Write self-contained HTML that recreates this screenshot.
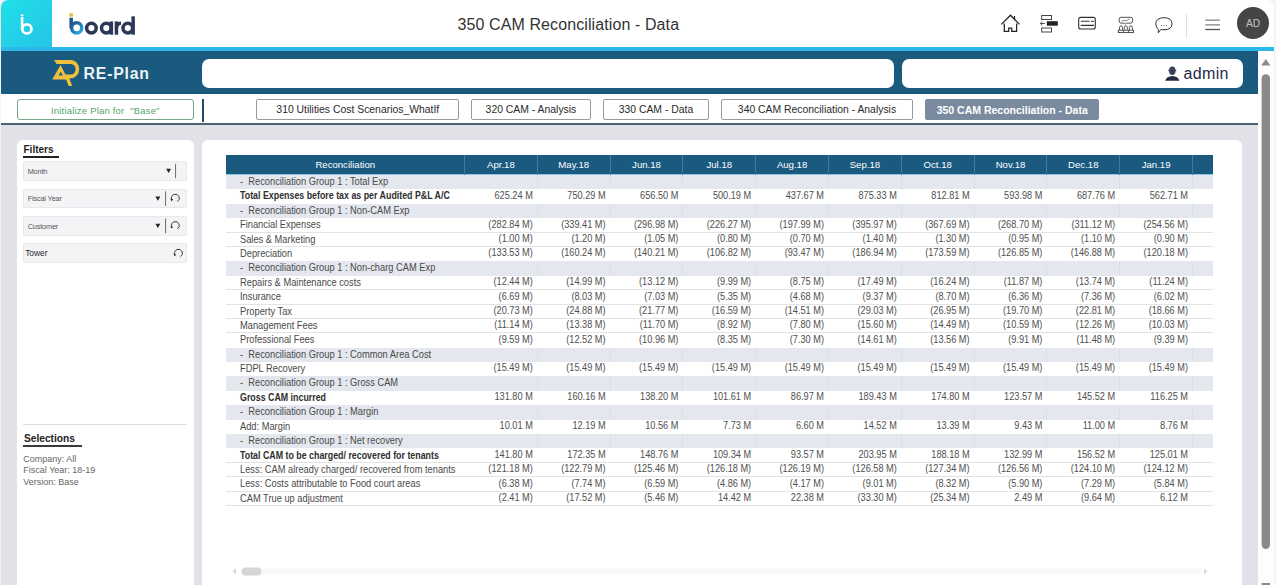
<!DOCTYPE html>
<html><head><meta charset="utf-8">
<style>
*{margin:0;padding:0;box-sizing:border-box}
html,body{width:1276px;height:585px;overflow:hidden}
body{background:#f4f4f5;font-family:"Liberation Sans",sans-serif;position:relative;color:#333}
.abs{position:absolute}
#hdr{left:1px;top:0;width:1273px;height:48px;background:#fff;border-radius:7px 7px 0 0;overflow:hidden}
#sq{left:1px;top:0;width:51px;height:48px;background:linear-gradient(135deg,#1fe0ea,#27c3e6);border-radius:7px 0 0 0}
#title{left:457.5px;top:16.2px;font-size:16px;letter-spacing:0.1px;color:#333;white-space:nowrap}
#cyan{left:1px;top:47px;width:1273px;height:4px;background:#2cb8e9}
#bar{left:1px;top:51px;width:1257px;height:43px;background:#1b5a7f}
#box1{left:202px;top:58.5px;width:691.5px;height:29.5px;background:#fff;border-radius:7px}
#box2{left:902px;top:58.5px;width:341px;height:29.5px;background:#fff;border-radius:7px}
#admin{left:1183.5px;top:65.3px;font-size:16px;letter-spacing:0.35px;color:#1f2a48;white-space:nowrap}
#tabrow{left:1px;top:94px;width:1257px;height:29px;background:#fff}
#tabline{left:1px;top:123px;width:1257px;height:2px;background:#4e6170}
#gray{left:1px;top:125px;width:1257px;height:460px;background:#e0e2e7}
#vscroll{left:1258px;top:51px;width:15.5px;height:534px;background:#fdfdfd}
#init{left:17px;top:99.2px;width:176.6px;height:20.5px;border:1px solid #7aa68a;border-radius:3px;background:#fff;color:#52a46c;font-size:9.4px;letter-spacing:0.25px;text-align:center;line-height:18.5px;padding-top:2px;white-space:pre}
#vdiv{left:202px;top:99px;width:2px;height:22.5px;background:#1d4d6a}
.tab{position:absolute;top:99.4px;height:20.3px;border:1px solid #9a9a9a;border-radius:2px;background:#fff;font-size:10.4px;color:#2a2a2a;text-align:center;line-height:18.3px;padding-top:1.1px;white-space:nowrap}
.tab.act{background:#7a8ba0;border-color:#7a8ba0;color:#fff;font-weight:bold;font-size:10.5px}
#lp{left:17px;top:140px;width:176.5px;height:460px;background:#fff;border-radius:6px}
#mp{left:202px;top:140px;width:1040px;height:460px;background:#fff;border-radius:6px}
.hd{position:absolute;top:155px;height:20px;line-height:19.6px;text-align:center;color:#fff;font-size:9.6px;white-space:nowrap}
.vs{position:absolute;top:155px;height:20px;width:1px;background:#3f7aa0}
.grow{position:absolute;left:226px;width:987px;background:#e4e7ee}
.gsep{position:absolute;width:1px;background:#dadee6}
.hl{position:absolute;left:226px;width:987px;height:0.8px;background:#e3e3e3}
.lab{position:absolute;transform:scaleY(1.1);transform-origin:0 10.6px;height:14.39px;line-height:14.39px;font-size:9.3px;color:#4a4a4a;white-space:nowrap;padding-top:0px}
.lab.b{font-weight:bold;color:#2e2e2e;font-size:8.85px;transform:translateY(0.6px) scaleY(1.17)}
.val{position:absolute;transform:scaleY(1.1);transform-origin:0 10.6px;height:14.39px;line-height:14.39px;font-size:9.2px;color:#505050;text-align:right;white-space:nowrap;padding-top:0.2px}
.fbox{position:absolute;left:23px;width:163.5px;height:19.5px;background:#f3f4f6;border:1px solid #e6e8ec;border-radius:2px}
.ftxt{position:absolute;font-size:7.3px;letter-spacing:-0.15px;color:#555;white-space:nowrap}
.sel{position:absolute;left:23.3px;font-size:9px;color:#666;white-space:nowrap}
</style></head><body>
<div id="hdr" class="abs"></div>
<div id="sq" class="abs"></div>
<svg class="abs" style="left:0;top:0" width="160" height="48" viewBox="0 0 160 48">
  <!-- small b in cyan square -->
  <rect x="20.8" y="14.4" width="2.6" height="1.6" fill="#fff"/>
  <rect x="20.8" y="16.8" width="2.6" height="12" fill="#fff"/>
  <circle cx="26.9" cy="28.9" r="4.6" fill="none" stroke="#fff" stroke-width="2.7"/>
  <!-- board logo -->
  <defs><linearGradient id="bg1" x1="0" y1="0" x2="1" y2="1"><stop offset="0" stop-color="#1d4f86"/><stop offset="1" stop-color="#2ab0e6"/></linearGradient></defs>
  <rect x="69.4" y="13.3" width="3.5" height="3.3" fill="#e9b93a"/>
  <rect x="69.4" y="17.7" width="3.5" height="10.5" fill="#1d5a92"/>
  <circle cx="76.7" cy="27.9" r="5.05" fill="none" stroke="url(#bg1)" stroke-width="3.5"/>
  <circle cx="91.4" cy="28.1" r="4.8" fill="none" stroke="#2c3857" stroke-width="3.5"/>
  <circle cx="106.3" cy="28.1" r="4.8" fill="none" stroke="#2c3857" stroke-width="3.5"/>
  <rect x="109.6" y="21.4" width="3.5" height="13.3" fill="#2c3857"/>
  <rect x="114.7" y="21.4" width="3.5" height="13.3" fill="#2c3857"/>
  <path d="M114.7,28 Q114.7,21.4 121,21.4 L121,24.9 Q118.2,24.9 118.2,28 Z" fill="#2c3857"/>
  <circle cx="127.8" cy="28.1" r="4.8" fill="none" stroke="#2c3857" stroke-width="3.5"/>
  <rect x="131.4" y="16.3" width="3.5" height="18.4" fill="#2c3857"/>
</svg>
<div id="title" class="abs">350 CAM Reconciliation - Data</div>
<!-- header icons -->
<svg class="abs" style="left:990px;top:0" width="286" height="48" viewBox="990 0 286 48">
  <g fill="none" stroke="#222" stroke-width="1.25" stroke-linejoin="miter">
    <path d="M1001.3,24.4 L1010.5,15.2 L1019.5,24.4"/>
    <path d="M1014.5,16 L1014.5,19.3"/>
    <path d="M1004.3,23.6 V31.4 H1008.7 V28.1 H1011.7 V31.4 H1016.6 V23.6"/>
  </g>
  <g fill="none" stroke="#444" stroke-width="1">
    <rect x="1041.7" y="15.5" width="9.8" height="4"/>
    <rect x="1041.7" y="28" width="9.8" height="4"/>
  </g>
  <rect x="1046.8" y="21.2" width="11" height="4.5" fill="#222"/>
  <path d="M1040.2,23.5 H1045 M1042.3,21.6 L1040.3,23.5 L1042.3,25.4" fill="none" stroke="#444" stroke-width="0.9"/>
  <rect x="1078.7" y="17.4" width="16.6" height="11.6" rx="2" fill="none" stroke="#333" stroke-width="1.1"/>
  <path d="M1081.3,21.3 H1089.2 M1091.4,21.3 H1093.6 M1081.3,25.4 H1093.6" stroke="#333" stroke-width="1.1" stroke-linecap="round"/>
  <g fill="none" stroke="#333" stroke-width="0.85">
    <path d="M1120.9,17.3 H1130.9 Q1132.6,17.3 1132.6,19.5 V21 Q1132.6,23.1 1130.9,23.1 H1126.6 L1125.4,24.3 L1124.2,23.1 H1120.9 Q1119.2,23.1 1119.2,21 V19.5 Q1119.2,17.3 1120.9,17.3 Z"/>
    <path d="M1121.7,21.5 Q1123,19.8 1124.5,20.6 Q1126,21.4 1127.5,20 Q1128.6,19 1129.7,19.1" stroke-width="0.6"/>
    <path d="M1119.5,29.8 V27.4 A1.5,1.5 0 0 1 1122.5,27.4 V29.8 M1124.3,29.8 V27.4 A1.5,1.5 0 0 1 1127.3,27.4 V29.8 M1129.4,29.8 V27.4 A1.5,1.5 0 0 1 1132.4,27.4 V29.8"/>
    <rect x="1118.3" y="30.2" width="15.2" height="2.4"/>
    <path d="M1123.4,30.2 V32.6 M1128.6,30.2 V32.6"/>
  </g>
  <path d="M1158.3,29.3 Q1155.7,27.5 1155.8,23.8 Q1156,17.8 1164,17.7 Q1172,17.8 1172,23.8 Q1172,29.7 1164,29.7 Q1162,29.7 1161,29.4 L1158.3,32.8 Z" fill="none" stroke="#333" stroke-width="1"/>
  <path d="M1161.2,25.7 h0.9 M1163.6,25.7 h0.9 M1166,25.7 h0.9" stroke="#333" stroke-width="0.9"/>
  <rect x="1185.9" y="14.3" width="1" height="24" fill="#dcdcdc"/>
  <path d="M1205.3,20.1 H1220 M1205.3,24.8 H1220" stroke="#808080" stroke-width="1.3"/><path d="M1205.3,29.5 H1220" stroke="#555" stroke-width="1.3"/>
  <circle cx="1253" cy="23" r="16" fill="#454545"/>
  <text x="1253" y="27.4" text-anchor="middle" font-family="Liberation Sans" font-size="10.2" fill="#c4c4c4">AD</text>
</svg>
<div id="cyan" class="abs"></div>
<div id="bar" class="abs"></div>
<svg class="abs" style="left:48px;top:55px" width="40" height="35" viewBox="48 55 40 35">
  <g fill="#f0bf3d">
    <path d="M54,60 L71,60 A8.2,9.15 0 0 1 71,78.3 L66,78.3 L64.3,74.5 L71,74.5 A4.6,5.25 0 0 0 71,64 L56.6,64 Z"/>
    <path fill-rule="evenodd" d="M60.6,65 L68,79.6 L52.2,79.6 Z M60.7,71.8 L62.9,75.6 L58.6,75.6 Z"/>
    <path d="M64.4,75 L68.2,75 L72.2,85.9 L68.6,85.9 Z"/>
  </g>
</svg>
<div class="abs" style="left:83.6px;top:65.3px;font-size:15.8px;font-weight:bold;color:#eef3f7;letter-spacing:0.8px;white-space:nowrap">RE-Plan</div>
<div id="box1" class="abs"></div>
<div id="box2" class="abs"></div>
<svg class="abs" style="left:1164px;top:65px" width="17" height="17" viewBox="1164 65 17 17">
  <ellipse cx="1172.3" cy="70.8" rx="3.2" ry="4.3" fill="#3b4058"/>
  <rect x="1168.2" y="69.8" width="8.2" height="1.5" rx="0.7" fill="#3b4058"/>
  <path d="M1165.2,80.8 Q1166.5,76.3 1172.3,76 Q1178.1,76.3 1179.4,80.8 Z" fill="#252a45"/>
</svg>
<div id="admin" class="abs">admin</div>
<div id="tabrow" class="abs"></div>
<div id="init" class="abs">Initialize Plan for  "Base"</div>
<div id="vdiv" class="abs"></div>
<div class="tab" style="left:256.3px;width:203px">310 Utilities Cost Scenarios_WhatIf</div>
<div class="tab" style="left:471.3px;width:119.3px">320 CAM - Analysis</div>
<div class="tab" style="left:602.5px;width:106.9px">330 CAM - Data</div>
<div class="tab" style="left:721.4px;width:191.2px">340 CAM Reconciliation - Analysis</div>
<div class="tab act" style="left:925.3px;width:173.8px">350 CAM Reconciliation - Data</div>
<div id="tabline" class="abs"></div>
<div id="gray" class="abs"></div>
<div class="abs" style="left:1px;top:125px;width:1257px;height:1px;background:#d9e4ed"></div>
<div id="vscroll" class="abs"></div>
<svg class="abs" style="left:1258px;top:51px" width="18" height="534" viewBox="1258 51 18 534">
  <path d="M1261.2,65.6 L1265.8,59.1 L1270.4,65.6 Z" fill="#8a8a8a"/>
  <rect x="1261.6" y="74.2" width="8.4" height="474.8" rx="4.2" fill="#8a8a8a"/>
  <rect x="1261.6" y="583" width="8.4" height="4" fill="#8a8a8a"/>
</svg>
<div id="lp" class="abs"></div>
<div class="abs" style="left:23.5px;top:143.5px;font-size:10px;font-weight:bold;color:#222">Filters</div>
<div class="abs" style="left:23px;top:156.1px;width:36px;height:1.6px;background:#222"></div>
<div class="fbox" style="top:161.3px"></div>
<div class="ftxt" style="left:27.7px;top:166.5px">Month</div>
<svg class="abs" style="left:160px;top:160px" width="30" height="110" viewBox="160 160 30 110">
  <path d="M166.2,168.8 L171,168.8 L168.6,173 Z" fill="#222"/>
  <rect x="175.2" y="163.8" width="0.85" height="14.4" fill="#555"/>
  <path d="M155.4,196 L160.3,196 L157.85,200.2 Z" fill="#222"/>
</svg>
<div class="fbox" style="top:188.9px"></div>
<div class="ftxt" style="left:27.7px;top:194px">Fiscal Year</div>
<div class="fbox" style="top:216.3px"></div>
<div class="ftxt" style="left:27.7px;top:221.5px">Customer</div>
<div class="fbox" style="top:243.3px"></div>
<div class="ftxt" style="left:25.2px;top:247.6px;color:#2a2a2a;font-size:8.4px;letter-spacing:0">Tower</div>
<svg class="abs" style="left:150px;top:185px" width="40" height="80" viewBox="150 185 40 80">
  <g fill="#222">
    <path d="M155.4,196.5 L160.3,196.5 L157.85,200.7 Z"/>
    <path d="M155.4,223.8 L160.3,223.8 L157.85,228 Z"/>
  </g>
  <rect x="165.2" y="191.3" width="0.85" height="14.6" fill="#555"/>
  <rect x="165.2" y="218.6" width="0.85" height="14.6" fill="#555"/>
  <path d="M177.35,201.48 A3.9,3.9 0 1 0 171.63,199.11" fill="none" stroke="#333" stroke-width="0.95"/><path d="M170.33,198.51 L173.23,199.61 L171.43,201.21 Z" fill="#222"/>
<path d="M177.35,228.88 A3.9,3.9 0 1 0 171.63,226.51" fill="none" stroke="#333" stroke-width="0.95"/><path d="M170.33,225.91 L173.23,227.01 L171.43,228.61 Z" fill="#222"/>
<path d="M180.45,256.58 A3.9,3.9 0 1 0 174.73,254.21" fill="none" stroke="#333" stroke-width="0.95"/><path d="M173.43,253.61 L176.33,254.71 L174.53,256.31 Z" fill="#222"/>
</svg>
<div class="abs" style="left:23px;top:424.3px;width:163.7px;height:1px;background:#dcdde0"></div>
<div class="abs" style="left:24px;top:433px;font-size:10.2px;font-weight:bold;color:#222">Selections</div>
<div class="abs" style="left:23px;top:445.3px;width:59px;height:1.6px;background:#3a3a3a"></div>
<div class="sel" style="top:453.8px">Company: All</div>
<div class="sel" style="top:465.4px">Fiscal Year: 18-19</div>
<div class="sel" style="top:477.2px">Version: Base</div>
<div id="mp" class="abs"></div>
<div class="abs" style="left:226px;top:155px;width:987px;height:20px;background:#1b5a7f"></div>
<div class="abs" style="left:226px;top:174.4px;width:987px;height:0.8px;background:#8ec6e6"></div>
<div class="hd" style="left:226px;width:238.5px">Reconciliation</div>
<div class="hd" style="left:464.5px;width:72.8px">Apr.18</div>
<div class="hd" style="left:537.3px;width:72.8px">May.18</div>
<div class="hd" style="left:610.1px;width:72.8px">Jun.18</div>
<div class="hd" style="left:682.9px;width:72.8px">Jul.18</div>
<div class="hd" style="left:755.7px;width:72.8px">Aug.18</div>
<div class="hd" style="left:828.5px;width:72.8px">Sep.18</div>
<div class="hd" style="left:901.3px;width:72.8px">Oct.18</div>
<div class="hd" style="left:974.1px;width:72.8px">Nov.18</div>
<div class="hd" style="left:1046.9px;width:72.8px">Dec.18</div>
<div class="hd" style="left:1119.7px;width:72.8px">Jan.19</div>
<div class="vs" style="left:464px"></div>
<div class="vs" style="left:536.8px"></div>
<div class="vs" style="left:609.6px"></div>
<div class="vs" style="left:682.4px"></div>
<div class="vs" style="left:755.2px"></div>
<div class="vs" style="left:828px"></div>
<div class="vs" style="left:900.8px"></div>
<div class="vs" style="left:973.6px"></div>
<div class="vs" style="left:1046.4px"></div>
<div class="vs" style="left:1119.2px"></div>
<div class="vs" style="left:1192px"></div>
<div class="grow" style="top:175px;height:14.39px"></div>
<div class="gsep" style="left:536.8px;top:175px;height:14.39px"></div>
<div class="gsep" style="left:609.6px;top:175px;height:14.39px"></div>
<div class="gsep" style="left:682.4px;top:175px;height:14.39px"></div>
<div class="gsep" style="left:755.2px;top:175px;height:14.39px"></div>
<div class="gsep" style="left:828px;top:175px;height:14.39px"></div>
<div class="gsep" style="left:900.8px;top:175px;height:14.39px"></div>
<div class="gsep" style="left:973.6px;top:175px;height:14.39px"></div>
<div class="gsep" style="left:1046.4px;top:175px;height:14.39px"></div>
<div class="gsep" style="left:1119.2px;top:175px;height:14.39px"></div>
<div class="gsep" style="left:1192px;top:175px;height:14.39px"></div>
<div class="lab" style="top:175px;left:240px">-&nbsp;&nbsp;Reconciliation Group 1 : Total Exp</div>
<div class="lab b" style="top:189.49px;left:240px">Total Expenses before tax as per Audited P&amp;L A/C</div>
<div class="val" style="top:188.79px;left:464.5px;width:68.3px">625.24 M</div>
<div class="val" style="top:188.79px;left:537.3px;width:68.3px">750.29 M</div>
<div class="val" style="top:188.79px;left:610.1px;width:68.3px">656.50 M</div>
<div class="val" style="top:188.79px;left:682.9px;width:68.3px">500.19 M</div>
<div class="val" style="top:188.79px;left:755.7px;width:68.3px">437.67 M</div>
<div class="val" style="top:188.79px;left:828.5px;width:68.3px">875.33 M</div>
<div class="val" style="top:188.79px;left:901.3px;width:68.3px">812.81 M</div>
<div class="val" style="top:188.79px;left:974.1px;width:68.3px">593.98 M</div>
<div class="val" style="top:188.79px;left:1046.9px;width:68.3px">687.76 M</div>
<div class="val" style="top:188.79px;left:1119.7px;width:68.3px">562.71 M</div>
<div class="grow" style="top:203.78px;height:14.39px"></div>
<div class="gsep" style="left:536.8px;top:203.78px;height:14.39px"></div>
<div class="gsep" style="left:609.6px;top:203.78px;height:14.39px"></div>
<div class="gsep" style="left:682.4px;top:203.78px;height:14.39px"></div>
<div class="gsep" style="left:755.2px;top:203.78px;height:14.39px"></div>
<div class="gsep" style="left:828px;top:203.78px;height:14.39px"></div>
<div class="gsep" style="left:900.8px;top:203.78px;height:14.39px"></div>
<div class="gsep" style="left:973.6px;top:203.78px;height:14.39px"></div>
<div class="gsep" style="left:1046.4px;top:203.78px;height:14.39px"></div>
<div class="gsep" style="left:1119.2px;top:203.78px;height:14.39px"></div>
<div class="gsep" style="left:1192px;top:203.78px;height:14.39px"></div>
<div class="lab" style="top:203.78px;left:240px">-&nbsp;&nbsp;Reconciliation Group 1 : Non-CAM Exp</div>
<div class="hl" style="top:231.76px"></div>
<div class="lab" style="top:218.27px;left:240px">Financial Expenses</div>
<div class="val" style="top:217.57px;left:464.5px;width:68.3px">(282.84 M)</div>
<div class="val" style="top:217.57px;left:537.3px;width:68.3px">(339.41 M)</div>
<div class="val" style="top:217.57px;left:610.1px;width:68.3px">(296.98 M)</div>
<div class="val" style="top:217.57px;left:682.9px;width:68.3px">(226.27 M)</div>
<div class="val" style="top:217.57px;left:755.7px;width:68.3px">(197.99 M)</div>
<div class="val" style="top:217.57px;left:828.5px;width:68.3px">(395.97 M)</div>
<div class="val" style="top:217.57px;left:901.3px;width:68.3px">(367.69 M)</div>
<div class="val" style="top:217.57px;left:974.1px;width:68.3px">(268.70 M)</div>
<div class="val" style="top:217.57px;left:1046.9px;width:68.3px">(311.12 M)</div>
<div class="val" style="top:217.57px;left:1119.7px;width:68.3px">(254.56 M)</div>
<div class="hl" style="top:246.15px"></div>
<div class="lab" style="top:232.66px;left:240px">Sales &amp; Marketing</div>
<div class="val" style="top:231.96px;left:464.5px;width:68.3px">(1.00 M)</div>
<div class="val" style="top:231.96px;left:537.3px;width:68.3px">(1.20 M)</div>
<div class="val" style="top:231.96px;left:610.1px;width:68.3px">(1.05 M)</div>
<div class="val" style="top:231.96px;left:682.9px;width:68.3px">(0.80 M)</div>
<div class="val" style="top:231.96px;left:755.7px;width:68.3px">(0.70 M)</div>
<div class="val" style="top:231.96px;left:828.5px;width:68.3px">(1.40 M)</div>
<div class="val" style="top:231.96px;left:901.3px;width:68.3px">(1.30 M)</div>
<div class="val" style="top:231.96px;left:974.1px;width:68.3px">(0.95 M)</div>
<div class="val" style="top:231.96px;left:1046.9px;width:68.3px">(1.10 M)</div>
<div class="val" style="top:231.96px;left:1119.7px;width:68.3px">(0.90 M)</div>
<div class="lab" style="top:247.05px;left:240px">Depreciation</div>
<div class="val" style="top:246.35px;left:464.5px;width:68.3px">(133.53 M)</div>
<div class="val" style="top:246.35px;left:537.3px;width:68.3px">(160.24 M)</div>
<div class="val" style="top:246.35px;left:610.1px;width:68.3px">(140.21 M)</div>
<div class="val" style="top:246.35px;left:682.9px;width:68.3px">(106.82 M)</div>
<div class="val" style="top:246.35px;left:755.7px;width:68.3px">(93.47 M)</div>
<div class="val" style="top:246.35px;left:828.5px;width:68.3px">(186.94 M)</div>
<div class="val" style="top:246.35px;left:901.3px;width:68.3px">(173.59 M)</div>
<div class="val" style="top:246.35px;left:974.1px;width:68.3px">(126.85 M)</div>
<div class="val" style="top:246.35px;left:1046.9px;width:68.3px">(146.88 M)</div>
<div class="val" style="top:246.35px;left:1119.7px;width:68.3px">(120.18 M)</div>
<div class="grow" style="top:261.34px;height:14.39px"></div>
<div class="gsep" style="left:536.8px;top:261.34px;height:14.39px"></div>
<div class="gsep" style="left:609.6px;top:261.34px;height:14.39px"></div>
<div class="gsep" style="left:682.4px;top:261.34px;height:14.39px"></div>
<div class="gsep" style="left:755.2px;top:261.34px;height:14.39px"></div>
<div class="gsep" style="left:828px;top:261.34px;height:14.39px"></div>
<div class="gsep" style="left:900.8px;top:261.34px;height:14.39px"></div>
<div class="gsep" style="left:973.6px;top:261.34px;height:14.39px"></div>
<div class="gsep" style="left:1046.4px;top:261.34px;height:14.39px"></div>
<div class="gsep" style="left:1119.2px;top:261.34px;height:14.39px"></div>
<div class="gsep" style="left:1192px;top:261.34px;height:14.39px"></div>
<div class="lab" style="top:261.34px;left:240px">-&nbsp;&nbsp;Reconciliation Group 1 : Non-charg CAM Exp</div>
<div class="hl" style="top:289.32px"></div>
<div class="lab" style="top:275.83px;left:240px">Repairs &amp; Maintenance costs</div>
<div class="val" style="top:275.13px;left:464.5px;width:68.3px">(12.44 M)</div>
<div class="val" style="top:275.13px;left:537.3px;width:68.3px">(14.99 M)</div>
<div class="val" style="top:275.13px;left:610.1px;width:68.3px">(13.12 M)</div>
<div class="val" style="top:275.13px;left:682.9px;width:68.3px">(9.99 M)</div>
<div class="val" style="top:275.13px;left:755.7px;width:68.3px">(8.75 M)</div>
<div class="val" style="top:275.13px;left:828.5px;width:68.3px">(17.49 M)</div>
<div class="val" style="top:275.13px;left:901.3px;width:68.3px">(16.24 M)</div>
<div class="val" style="top:275.13px;left:974.1px;width:68.3px">(11.87 M)</div>
<div class="val" style="top:275.13px;left:1046.9px;width:68.3px">(13.74 M)</div>
<div class="val" style="top:275.13px;left:1119.7px;width:68.3px">(11.24 M)</div>
<div class="hl" style="top:303.71px"></div>
<div class="lab" style="top:290.22px;left:240px">Insurance</div>
<div class="val" style="top:289.52px;left:464.5px;width:68.3px">(6.69 M)</div>
<div class="val" style="top:289.52px;left:537.3px;width:68.3px">(8.03 M)</div>
<div class="val" style="top:289.52px;left:610.1px;width:68.3px">(7.03 M)</div>
<div class="val" style="top:289.52px;left:682.9px;width:68.3px">(5.35 M)</div>
<div class="val" style="top:289.52px;left:755.7px;width:68.3px">(4.68 M)</div>
<div class="val" style="top:289.52px;left:828.5px;width:68.3px">(9.37 M)</div>
<div class="val" style="top:289.52px;left:901.3px;width:68.3px">(8.70 M)</div>
<div class="val" style="top:289.52px;left:974.1px;width:68.3px">(6.36 M)</div>
<div class="val" style="top:289.52px;left:1046.9px;width:68.3px">(7.36 M)</div>
<div class="val" style="top:289.52px;left:1119.7px;width:68.3px">(6.02 M)</div>
<div class="hl" style="top:318.1px"></div>
<div class="lab" style="top:304.61px;left:240px">Property Tax</div>
<div class="val" style="top:303.91px;left:464.5px;width:68.3px">(20.73 M)</div>
<div class="val" style="top:303.91px;left:537.3px;width:68.3px">(24.88 M)</div>
<div class="val" style="top:303.91px;left:610.1px;width:68.3px">(21.77 M)</div>
<div class="val" style="top:303.91px;left:682.9px;width:68.3px">(16.59 M)</div>
<div class="val" style="top:303.91px;left:755.7px;width:68.3px">(14.51 M)</div>
<div class="val" style="top:303.91px;left:828.5px;width:68.3px">(29.03 M)</div>
<div class="val" style="top:303.91px;left:901.3px;width:68.3px">(26.95 M)</div>
<div class="val" style="top:303.91px;left:974.1px;width:68.3px">(19.70 M)</div>
<div class="val" style="top:303.91px;left:1046.9px;width:68.3px">(22.81 M)</div>
<div class="val" style="top:303.91px;left:1119.7px;width:68.3px">(18.66 M)</div>
<div class="hl" style="top:332.49px"></div>
<div class="lab" style="top:319px;left:240px">Management Fees</div>
<div class="val" style="top:318.3px;left:464.5px;width:68.3px">(11.14 M)</div>
<div class="val" style="top:318.3px;left:537.3px;width:68.3px">(13.38 M)</div>
<div class="val" style="top:318.3px;left:610.1px;width:68.3px">(11.70 M)</div>
<div class="val" style="top:318.3px;left:682.9px;width:68.3px">(8.92 M)</div>
<div class="val" style="top:318.3px;left:755.7px;width:68.3px">(7.80 M)</div>
<div class="val" style="top:318.3px;left:828.5px;width:68.3px">(15.60 M)</div>
<div class="val" style="top:318.3px;left:901.3px;width:68.3px">(14.49 M)</div>
<div class="val" style="top:318.3px;left:974.1px;width:68.3px">(10.59 M)</div>
<div class="val" style="top:318.3px;left:1046.9px;width:68.3px">(12.26 M)</div>
<div class="val" style="top:318.3px;left:1119.7px;width:68.3px">(10.03 M)</div>
<div class="lab" style="top:333.39px;left:240px">Professional Fees</div>
<div class="val" style="top:332.69px;left:464.5px;width:68.3px">(9.59 M)</div>
<div class="val" style="top:332.69px;left:537.3px;width:68.3px">(12.52 M)</div>
<div class="val" style="top:332.69px;left:610.1px;width:68.3px">(10.96 M)</div>
<div class="val" style="top:332.69px;left:682.9px;width:68.3px">(8.35 M)</div>
<div class="val" style="top:332.69px;left:755.7px;width:68.3px">(7.30 M)</div>
<div class="val" style="top:332.69px;left:828.5px;width:68.3px">(14.61 M)</div>
<div class="val" style="top:332.69px;left:901.3px;width:68.3px">(13.56 M)</div>
<div class="val" style="top:332.69px;left:974.1px;width:68.3px">(9.91 M)</div>
<div class="val" style="top:332.69px;left:1046.9px;width:68.3px">(11.48 M)</div>
<div class="val" style="top:332.69px;left:1119.7px;width:68.3px">(9.39 M)</div>
<div class="grow" style="top:347.68px;height:14.39px"></div>
<div class="gsep" style="left:536.8px;top:347.68px;height:14.39px"></div>
<div class="gsep" style="left:609.6px;top:347.68px;height:14.39px"></div>
<div class="gsep" style="left:682.4px;top:347.68px;height:14.39px"></div>
<div class="gsep" style="left:755.2px;top:347.68px;height:14.39px"></div>
<div class="gsep" style="left:828px;top:347.68px;height:14.39px"></div>
<div class="gsep" style="left:900.8px;top:347.68px;height:14.39px"></div>
<div class="gsep" style="left:973.6px;top:347.68px;height:14.39px"></div>
<div class="gsep" style="left:1046.4px;top:347.68px;height:14.39px"></div>
<div class="gsep" style="left:1119.2px;top:347.68px;height:14.39px"></div>
<div class="gsep" style="left:1192px;top:347.68px;height:14.39px"></div>
<div class="lab" style="top:347.68px;left:240px">-&nbsp;&nbsp;Reconciliation Group 1 : Common Area Cost</div>
<div class="lab" style="top:362.17px;left:240px">FDPL Recovery</div>
<div class="val" style="top:361.47px;left:464.5px;width:68.3px">(15.49 M)</div>
<div class="val" style="top:361.47px;left:537.3px;width:68.3px">(15.49 M)</div>
<div class="val" style="top:361.47px;left:610.1px;width:68.3px">(15.49 M)</div>
<div class="val" style="top:361.47px;left:682.9px;width:68.3px">(15.49 M)</div>
<div class="val" style="top:361.47px;left:755.7px;width:68.3px">(15.49 M)</div>
<div class="val" style="top:361.47px;left:828.5px;width:68.3px">(15.49 M)</div>
<div class="val" style="top:361.47px;left:901.3px;width:68.3px">(15.49 M)</div>
<div class="val" style="top:361.47px;left:974.1px;width:68.3px">(15.49 M)</div>
<div class="val" style="top:361.47px;left:1046.9px;width:68.3px">(15.49 M)</div>
<div class="val" style="top:361.47px;left:1119.7px;width:68.3px">(15.49 M)</div>
<div class="grow" style="top:376.46px;height:14.39px"></div>
<div class="gsep" style="left:536.8px;top:376.46px;height:14.39px"></div>
<div class="gsep" style="left:609.6px;top:376.46px;height:14.39px"></div>
<div class="gsep" style="left:682.4px;top:376.46px;height:14.39px"></div>
<div class="gsep" style="left:755.2px;top:376.46px;height:14.39px"></div>
<div class="gsep" style="left:828px;top:376.46px;height:14.39px"></div>
<div class="gsep" style="left:900.8px;top:376.46px;height:14.39px"></div>
<div class="gsep" style="left:973.6px;top:376.46px;height:14.39px"></div>
<div class="gsep" style="left:1046.4px;top:376.46px;height:14.39px"></div>
<div class="gsep" style="left:1119.2px;top:376.46px;height:14.39px"></div>
<div class="gsep" style="left:1192px;top:376.46px;height:14.39px"></div>
<div class="lab" style="top:376.46px;left:240px">-&nbsp;&nbsp;Reconciliation Group 1 : Gross CAM</div>
<div class="lab b" style="top:390.95px;left:240px">Gross CAM incurred</div>
<div class="val" style="top:390.25px;left:464.5px;width:68.3px">131.80 M</div>
<div class="val" style="top:390.25px;left:537.3px;width:68.3px">160.16 M</div>
<div class="val" style="top:390.25px;left:610.1px;width:68.3px">138.20 M</div>
<div class="val" style="top:390.25px;left:682.9px;width:68.3px">101.61 M</div>
<div class="val" style="top:390.25px;left:755.7px;width:68.3px">86.97 M</div>
<div class="val" style="top:390.25px;left:828.5px;width:68.3px">189.43 M</div>
<div class="val" style="top:390.25px;left:901.3px;width:68.3px">174.80 M</div>
<div class="val" style="top:390.25px;left:974.1px;width:68.3px">123.57 M</div>
<div class="val" style="top:390.25px;left:1046.9px;width:68.3px">145.52 M</div>
<div class="val" style="top:390.25px;left:1119.7px;width:68.3px">116.25 M</div>
<div class="grow" style="top:405.24px;height:14.39px"></div>
<div class="gsep" style="left:536.8px;top:405.24px;height:14.39px"></div>
<div class="gsep" style="left:609.6px;top:405.24px;height:14.39px"></div>
<div class="gsep" style="left:682.4px;top:405.24px;height:14.39px"></div>
<div class="gsep" style="left:755.2px;top:405.24px;height:14.39px"></div>
<div class="gsep" style="left:828px;top:405.24px;height:14.39px"></div>
<div class="gsep" style="left:900.8px;top:405.24px;height:14.39px"></div>
<div class="gsep" style="left:973.6px;top:405.24px;height:14.39px"></div>
<div class="gsep" style="left:1046.4px;top:405.24px;height:14.39px"></div>
<div class="gsep" style="left:1119.2px;top:405.24px;height:14.39px"></div>
<div class="gsep" style="left:1192px;top:405.24px;height:14.39px"></div>
<div class="lab" style="top:405.24px;left:240px">-&nbsp;&nbsp;Reconciliation Group 1 : Margin</div>
<div class="lab" style="top:419.73px;left:240px">Add: Margin</div>
<div class="val" style="top:419.03px;left:464.5px;width:68.3px">10.01 M</div>
<div class="val" style="top:419.03px;left:537.3px;width:68.3px">12.19 M</div>
<div class="val" style="top:419.03px;left:610.1px;width:68.3px">10.56 M</div>
<div class="val" style="top:419.03px;left:682.9px;width:68.3px">7.73 M</div>
<div class="val" style="top:419.03px;left:755.7px;width:68.3px">6.60 M</div>
<div class="val" style="top:419.03px;left:828.5px;width:68.3px">14.52 M</div>
<div class="val" style="top:419.03px;left:901.3px;width:68.3px">13.39 M</div>
<div class="val" style="top:419.03px;left:974.1px;width:68.3px">9.43 M</div>
<div class="val" style="top:419.03px;left:1046.9px;width:68.3px">11.00 M</div>
<div class="val" style="top:419.03px;left:1119.7px;width:68.3px">8.76 M</div>
<div class="grow" style="top:434.02px;height:14.39px"></div>
<div class="gsep" style="left:536.8px;top:434.02px;height:14.39px"></div>
<div class="gsep" style="left:609.6px;top:434.02px;height:14.39px"></div>
<div class="gsep" style="left:682.4px;top:434.02px;height:14.39px"></div>
<div class="gsep" style="left:755.2px;top:434.02px;height:14.39px"></div>
<div class="gsep" style="left:828px;top:434.02px;height:14.39px"></div>
<div class="gsep" style="left:900.8px;top:434.02px;height:14.39px"></div>
<div class="gsep" style="left:973.6px;top:434.02px;height:14.39px"></div>
<div class="gsep" style="left:1046.4px;top:434.02px;height:14.39px"></div>
<div class="gsep" style="left:1119.2px;top:434.02px;height:14.39px"></div>
<div class="gsep" style="left:1192px;top:434.02px;height:14.39px"></div>
<div class="lab" style="top:434.02px;left:240px">-&nbsp;&nbsp;Reconciliation Group 1 : Net recovery</div>
<div class="hl" style="top:462px"></div>
<div class="lab b" style="top:448.51px;left:240px">Total CAM to be charged/ recovered for tenants</div>
<div class="val" style="top:447.81px;left:464.5px;width:68.3px">141.80 M</div>
<div class="val" style="top:447.81px;left:537.3px;width:68.3px">172.35 M</div>
<div class="val" style="top:447.81px;left:610.1px;width:68.3px">148.76 M</div>
<div class="val" style="top:447.81px;left:682.9px;width:68.3px">109.34 M</div>
<div class="val" style="top:447.81px;left:755.7px;width:68.3px">93.57 M</div>
<div class="val" style="top:447.81px;left:828.5px;width:68.3px">203.95 M</div>
<div class="val" style="top:447.81px;left:901.3px;width:68.3px">188.18 M</div>
<div class="val" style="top:447.81px;left:974.1px;width:68.3px">132.99 M</div>
<div class="val" style="top:447.81px;left:1046.9px;width:68.3px">156.52 M</div>
<div class="val" style="top:447.81px;left:1119.7px;width:68.3px">125.01 M</div>
<div class="hl" style="top:476.39px"></div>
<div class="lab" style="top:462.9px;left:240px">Less: CAM already charged/ recovered from tenants</div>
<div class="val" style="top:462.2px;left:464.5px;width:68.3px">(121.18 M)</div>
<div class="val" style="top:462.2px;left:537.3px;width:68.3px">(122.79 M)</div>
<div class="val" style="top:462.2px;left:610.1px;width:68.3px">(125.46 M)</div>
<div class="val" style="top:462.2px;left:682.9px;width:68.3px">(126.18 M)</div>
<div class="val" style="top:462.2px;left:755.7px;width:68.3px">(126.19 M)</div>
<div class="val" style="top:462.2px;left:828.5px;width:68.3px">(126.58 M)</div>
<div class="val" style="top:462.2px;left:901.3px;width:68.3px">(127.34 M)</div>
<div class="val" style="top:462.2px;left:974.1px;width:68.3px">(126.56 M)</div>
<div class="val" style="top:462.2px;left:1046.9px;width:68.3px">(124.10 M)</div>
<div class="val" style="top:462.2px;left:1119.7px;width:68.3px">(124.12 M)</div>
<div class="hl" style="top:490.78px"></div>
<div class="lab" style="top:477.29px;left:240px">Less: Costs attributable to Food court areas</div>
<div class="val" style="top:476.59px;left:464.5px;width:68.3px">(6.38 M)</div>
<div class="val" style="top:476.59px;left:537.3px;width:68.3px">(7.74 M)</div>
<div class="val" style="top:476.59px;left:610.1px;width:68.3px">(6.59 M)</div>
<div class="val" style="top:476.59px;left:682.9px;width:68.3px">(4.86 M)</div>
<div class="val" style="top:476.59px;left:755.7px;width:68.3px">(4.17 M)</div>
<div class="val" style="top:476.59px;left:828.5px;width:68.3px">(9.01 M)</div>
<div class="val" style="top:476.59px;left:901.3px;width:68.3px">(8.32 M)</div>
<div class="val" style="top:476.59px;left:974.1px;width:68.3px">(5.90 M)</div>
<div class="val" style="top:476.59px;left:1046.9px;width:68.3px">(7.29 M)</div>
<div class="val" style="top:476.59px;left:1119.7px;width:68.3px">(5.84 M)</div>
<div class="hl" style="top:505.17px"></div>
<div class="lab" style="top:491.68px;left:240px">CAM True up adjustment</div>
<div class="val" style="top:490.98px;left:464.5px;width:68.3px">(2.41 M)</div>
<div class="val" style="top:490.98px;left:537.3px;width:68.3px">(17.52 M)</div>
<div class="val" style="top:490.98px;left:610.1px;width:68.3px">(5.46 M)</div>
<div class="val" style="top:490.98px;left:682.9px;width:68.3px">14.42 M</div>
<div class="val" style="top:490.98px;left:755.7px;width:68.3px">22.38 M</div>
<div class="val" style="top:490.98px;left:828.5px;width:68.3px">(33.30 M)</div>
<div class="val" style="top:490.98px;left:901.3px;width:68.3px">(25.34 M)</div>
<div class="val" style="top:490.98px;left:974.1px;width:68.3px">2.49 M</div>
<div class="val" style="top:490.98px;left:1046.9px;width:68.3px">(9.64 M)</div>
<div class="val" style="top:490.98px;left:1119.7px;width:68.3px">6.12 M</div>
<svg class="abs" style="left:226px;top:562px" width="990" height="18" viewBox="226 562 990 18">
  <path d="M236,568.5 L232.5,571.5 L236,574.5 Z" fill="#d8d8d8"/>
  <rect x="241.5" y="567.5" width="20" height="8" rx="4" fill="#d6d6d6"/>
  <rect x="262" y="568.5" width="940" height="6" fill="#f8f8f8"/>
  <path d="M1204,568.5 L1207.5,571.5 L1204,574.5 Z" fill="#d8d8d8"/>
</svg>
</body></html>
